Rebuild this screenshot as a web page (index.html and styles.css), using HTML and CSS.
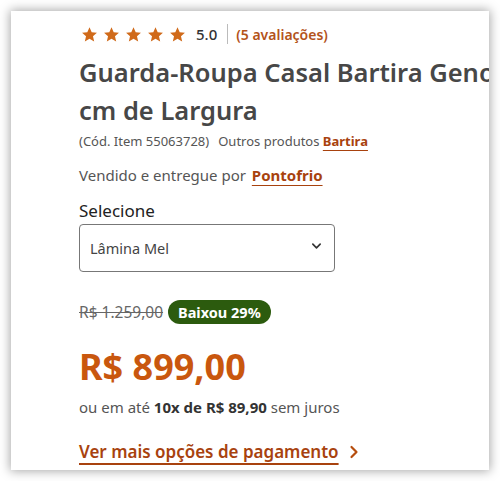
FILE: index.html
```html
<!DOCTYPE html>
<html lang="pt-BR">
<head>
<meta charset="utf-8">
<link rel="stylesheet" href="styles.css">
</head>
<body>
<div class="card">
  <div class="content">
    <div class="rating">
      <span class="stars">
        <svg viewBox="0 0 24 24" class="star"><path d="M12 1.8l3.1 6.9 7.4.7-5.6 5 1.7 7.4L12 17.9l-6.6 3.9 1.7-7.4-5.6-5 7.4-.7z"/></svg>
        <svg viewBox="0 0 24 24" class="star"><path d="M12 1.8l3.1 6.9 7.4.7-5.6 5 1.7 7.4L12 17.9l-6.6 3.9 1.7-7.4-5.6-5 7.4-.7z"/></svg>
        <svg viewBox="0 0 24 24" class="star"><path d="M12 1.8l3.1 6.9 7.4.7-5.6 5 1.7 7.4L12 17.9l-6.6 3.9 1.7-7.4-5.6-5 7.4-.7z"/></svg>
        <svg viewBox="0 0 24 24" class="star"><path d="M12 1.8l3.1 6.9 7.4.7-5.6 5 1.7 7.4L12 17.9l-6.6 3.9 1.7-7.4-5.6-5 7.4-.7z"/></svg>
        <svg viewBox="0 0 24 24" class="star"><path d="M12 1.8l3.1 6.9 7.4.7-5.6 5 1.7 7.4L12 17.9l-6.6 3.9 1.7-7.4-5.6-5 7.4-.7z"/></svg>
      </span>
      <span class="score">5.0</span>
      <span class="sep"></span>
      <span class="reviews">(5 avaliações)</span>
    </div>
    <h1 class="title"><span class="line">Guarda-Roupa Casal Bartira Genova 6 Portas 240</span><span class="line">cm de Largura</span></h1>
    <div class="meta">
      <span>(Cód. Item 55063728)</span>
      <span class="others">Outros produtos <a class="link">Bartira</a></span>
    </div>
    <div class="seller">Vendido e entregue por <a class="link">Pontofrio</a></div>
    <div class="select-label">Selecione</div>
    <div class="select">
      <span>Lâmina Mel</span>
      <svg class="chev" viewBox="0 0 12 8"><path d="M2 2l4 4 4-4" fill="none" stroke="#333" stroke-width="1.8" stroke-linecap="round" stroke-linejoin="round"/></svg>
    </div>
    <div class="old-row">
      <span class="old">R$ 1.259,00</span>
      <span class="badge">Baixou 29%</span>
    </div>
    <div class="price">R$ 899,00</div>
    <div class="install">ou em até <b>10x de R$ 89,90</b> sem juros</div>
    <div class="more"><a class="more-link">Ver mais opções de pagamento</a>
      <svg class="arrow" viewBox="0 0 10 14"><path d="M2.5 2l5 5-5 5" fill="none" stroke="#b64d0e" stroke-width="2.2" stroke-linecap="round" stroke-linejoin="round"/></svg>
    </div>
  </div>
</div>
</body>
</html>
```
FILE: styles.css
```css
* { box-sizing: border-box; }
html, body { margin: 0; padding: 0; background: #fff; }
body {
  font-family: "Noto Sans", "Open Sans", sans-serif;
  color: #3d3d3d;
  width: 500px;
  height: 481px;
  padding: 11px;
}
.card {
  width: 478px;
  height: 459px;
  background: #fff;
  box-shadow: 0 0 10px 1px rgba(0,0,0,0.35);
  overflow: hidden;
}
.content {
  padding: 12px 0 0 68px;
  width: 600px;
}
.rating {
  display: flex;
  align-items: center;
  height: 22px;
}
.stars { display: flex; gap: 5px; margin-left: 2px; }
.star { width: 17px; height: 17px; fill: #d06a1a; }
.score { font-size: 15px; font-weight: 500; color: #333; margin-left: 10px; }
.sep { width: 1px; height: 20px; background: #bbb; margin: 0 8px 0 10px; }
.reviews { font-size: 14px; font-weight: 600; color: #b3531a; }
.title {
  margin: 8px 0 0;
  font-size: 25.5px;
  font-weight: 600;
  color: #474747;
  line-height: 38px;
}
.title .line { display: block; white-space: nowrap; }
.meta {
  display: flex;
  gap: 9px;
  font-size: 13px;
  color: #555;
  margin-top: 3px;
  line-height: 18px;
}
.link {
  color: #a8420e;
  font-weight: 700;
  text-decoration: underline;
  text-underline-offset: 4px;
  text-decoration-thickness: 1px;
}
.seller {
  margin-top: 15px;
  font-size: 15px;
  color: #555;
  line-height: 20px;
}
.seller .link { margin-left: 2px; }
.select-label {
  margin-top: 15px;
  font-size: 17px;
  color: #222;
  line-height: 22px;
}
.select {
  margin-top: 2px;
  width: 256px;
  height: 48px;
  border: 1px solid #777;
  border-radius: 4px;
  display: flex;
  align-items: center;
  justify-content: space-between;
  padding: 0 12px 0 10px;
  font-size: 14.5px;
  color: #444;
}
.chev { width: 11px; height: 8px; margin-top: -4px; }
.old-row {
  margin-top: 28px;
  display: flex;
  align-items: center;
  gap: 5px;
}
.old {
  font-size: 15.5px;
  color: #666;
  text-decoration: line-through;
}
.badge {
  background: #2c5b0e;
  color: #fff;
  font-weight: 700;
  font-size: 14.5px;
  border-radius: 13px;
  padding: 2px 10px;
  line-height: 20px;
}
.price {
  margin-top: 21px;
  font-size: 36px;
  font-weight: 700;
  color: #c9570e;
  line-height: 44px;
}
.install {
  margin-top: 8px;
  font-size: 15px;
  color: #555;
  line-height: 20px;
}
.install b { color: #333; }
.more {
  margin-top: 24px;
  display: flex;
  align-items: center;
  gap: 10px;
  line-height: 22px;
}
.more-link {
  font-size: 17px;
  font-weight: 600;
  color: #a8420e;
  text-decoration: underline;
  text-underline-offset: 5px;
  text-decoration-thickness: 1.5px;
}
.arrow { width: 10px; height: 14px; }
```
